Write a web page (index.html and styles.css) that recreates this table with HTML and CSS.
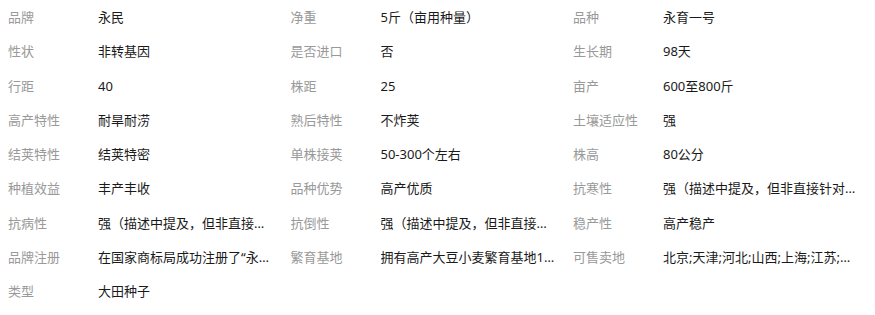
FILE: index.html
```html
<!DOCTYPE html>
<html lang="zh-CN">
<head>
<meta charset="utf-8">
<title>商品参数</title>
<link rel="stylesheet" href="styles.css">
</head>
<body>
<div class="params">
  <div class="item"><span class="label">品牌</span><span class="value">永民</span></div>
  <div class="item"><span class="label">净重</span><span class="value">5斤（亩用种量）</span></div>
  <div class="item"><span class="label">品种</span><span class="value">永育一号</span></div>

  <div class="item"><span class="label">性状</span><span class="value">非转基因</span></div>
  <div class="item"><span class="label">是否进口</span><span class="value">否</span></div>
  <div class="item"><span class="label">生长期</span><span class="value">98天</span></div>

  <div class="item"><span class="label">行距</span><span class="value">40</span></div>
  <div class="item"><span class="label">株距</span><span class="value">25</span></div>
  <div class="item"><span class="label">亩产</span><span class="value">600至800斤</span></div>

  <div class="item"><span class="label">高产特性</span><span class="value">耐旱耐涝</span></div>
  <div class="item"><span class="label">熟后特性</span><span class="value">不炸荚</span></div>
  <div class="item"><span class="label">土壤适应性</span><span class="value">强</span></div>

  <div class="item"><span class="label">结荚特性</span><span class="value">结荚特密</span></div>
  <div class="item"><span class="label">单株接荚</span><span class="value">50-300个左右</span></div>
  <div class="item"><span class="label">株高</span><span class="value">80公分</span></div>

  <div class="item"><span class="label">种植效益</span><span class="value">丰产丰收</span></div>
  <div class="item"><span class="label">品种优势</span><span class="value">高产优质</span></div>
  <div class="item"><span class="label">抗寒性</span><span class="value">强（描述中提及，但非直接针对抗寒性）</span></div>

  <div class="item"><span class="label">抗病性</span><span class="value">强（描述中提及，但非直接针对抗病性）</span></div>
  <div class="item"><span class="label">抗倒性</span><span class="value">强（描述中提及，但非直接针对抗倒性）</span></div>
  <div class="item"><span class="label">稳产性</span><span class="value">高产稳产</span></div>

  <div class="item"><span class="label">品牌注册</span><span class="value">在国家商标局成功注册了“永民”商标</span></div>
  <div class="item"><span class="label">繁育基地</span><span class="value">拥有高产大豆小麦繁育基地1000余亩</span></div>
  <div class="item"><span class="label">可售卖地</span><span class="value">北京;天津;河北;山西;上海;江苏;浙江;安徽</span></div>

  <div class="item"><span class="label">类型</span><span class="value">大田种子</span></div>
</div>
</body>
</html>
```

FILE: styles.css
```css
html, body {
  margin: 0;
  padding: 0;
  background: #ffffff;
}

body {
  padding-left: 8px;
  padding-right: 8px;
  font-family: "Noto Sans", "Noto Sans CJK SC", sans-serif;
  font-size: 13px;
}

.params {
  display: grid;
  grid-template-columns: 282.5px 282.5px 1fr;
  grid-auto-rows: 34.25px;
}

.item {
  display: flex;
  align-items: center;
  min-width: 0;
  line-height: 20px;
}

.label {
  flex: 0 0 90px;
  color: #999999;
  white-space: nowrap;
}

.value {
  flex: 1 1 auto;
  min-width: 0;
  padding-right: 18px;
  color: #1a1a1a;
  white-space: nowrap;
  overflow: hidden;
  text-overflow: ellipsis;
}

.item:nth-child(3n) .value {
  padding-right: 10px;
}
```
